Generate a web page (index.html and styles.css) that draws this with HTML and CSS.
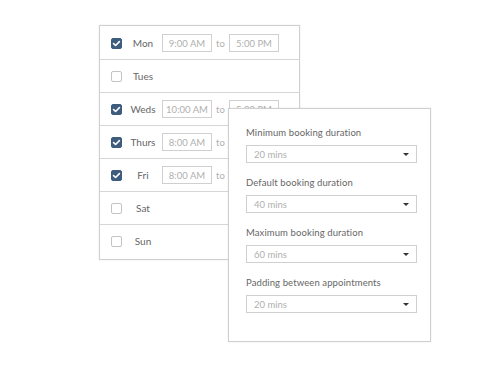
FILE: index.html
```html
<!DOCTYPE html>
<html>
<head>
<meta charset="utf-8">
<link rel="stylesheet" href="styles.css">
</head>
<body>
<div class="scene">
  <div class="days">
    <div class="row">
      <span class="cb on"><svg viewBox="0 0 11 11"><path d="M2.6 5.6 L4.6 7.5 L8.4 3.6" /></svg></span>
      <span class="day">Mon</span>
      <span class="time">9:00 AM</span><span class="to">to</span><span class="time">5:00 PM</span>
    </div>
    <div class="row">
      <span class="cb"></span>
      <span class="day">Tues</span>
    </div>
    <div class="row">
      <span class="cb on"><svg viewBox="0 0 11 11"><path d="M2.6 5.6 L4.6 7.5 L8.4 3.6" /></svg></span>
      <span class="day">Weds</span>
      <span class="time">10:00 AM</span><span class="to">to</span><span class="time">5:00 PM</span>
    </div>
    <div class="row">
      <span class="cb on"><svg viewBox="0 0 11 11"><path d="M2.6 5.6 L4.6 7.5 L8.4 3.6" /></svg></span>
      <span class="day">Thurs</span>
      <span class="time">8:00 AM</span><span class="to">to</span><span class="time">5:00 PM</span>
    </div>
    <div class="row">
      <span class="cb on"><svg viewBox="0 0 11 11"><path d="M2.6 5.6 L4.6 7.5 L8.4 3.6" /></svg></span>
      <span class="day">Fri</span>
      <span class="time">8:00 AM</span><span class="to">to</span><span class="time">5:00 PM</span>
    </div>
    <div class="row">
      <span class="cb"></span>
      <span class="day">Sat</span>
    </div>
    <div class="row">
      <span class="cb"></span>
      <span class="day">Sun</span>
    </div>
  </div>

  <div class="settings">
    <div class="field">
      <div class="label">Minimum booking duration</div>
      <div class="select"><span>20 mins</span><span class="caret"></span></div>
    </div>
    <div class="field">
      <div class="label">Default booking duration</div>
      <div class="select"><span>40 mins</span><span class="caret"></span></div>
    </div>
    <div class="field">
      <div class="label">Maximum booking duration</div>
      <div class="select"><span>60 mins</span><span class="caret"></span></div>
    </div>
    <div class="field">
      <div class="label">Padding between appointments</div>
      <div class="select"><span>20 mins</span><span class="caret"></span></div>
    </div>
  </div>
</div>
</body>
</html>
```

FILE: styles.css
```css
* { box-sizing: border-box; }
html, body { margin: 0; padding: 0; background: #ffffff; }
body { font-family: Lato, "Open Sans", sans-serif; color: #666; }

.scene {
  position: relative;
  width: 500px;
  height: 375px;
  padding: 25px 0 0 99px;
}

.days {
  width: 201px;
  border: 1px solid #cfcfcf;
  box-shadow: 0 0 2px rgba(0,0,0,0.08);
  padding: 1px 0 2px;
  background: #fff;
}

.row {
  display: flex;
  align-items: center;
  height: 33px;
  border-bottom: 1px solid #d6d6d6;
  padding-left: 11px;
}
.row:last-child { border-bottom: none; height: 32px; }

.cb {
  width: 11px;
  height: 11px;
  border: 1px solid #c4c4c4;
  border-radius: 2px;
  background: #fff;
  display: inline-flex;
  flex: none;
}
.cb.on {
  background: #3e5d7e;
  border-color: #3e5d7e;
}
.cb svg { width: 11px; height: 11px; margin: -1px; }
.cb path { fill: none; stroke: #fff; stroke-width: 1.6; stroke-linecap: round; stroke-linejoin: round; }

.day {
  width: 32px;
  margin-left: 5px;
  text-align: center;
  font-size: 10px;
  color: #666;
  flex: none;
}

.time {
  width: 50px;
  height: 18px;
  margin-left: 3px;
  border: 1px solid #d0d0d0;
  font-size: 9.5px;
  color: #b0b0b0;
  display: flex;
  align-items: center;
  justify-content: center;
  flex: none;
}
.to {
  width: 17px;
  text-align: center;
  font-size: 9.5px;
  color: #b0b0b0;
  margin-right: -3px;
}

.settings {
  position: absolute;
  left: 228px;
  top: 108px;
  width: 203px;
  height: 234px;
  background: #fff;
  border: 1px solid #cfcfcf;
  box-shadow: 0 0 2px rgba(0,0,0,0.08);
  padding: 18px 0 0 17px;
}

.field { margin-bottom: 14px; }

.label {
  font-size: 9.5px;
  line-height: 12px;
  color: #666;
  margin-bottom: 6px;
  letter-spacing: 0.1px;
}

.select {
  width: 171px;
  height: 18px;
  border: 1px solid #d0d0d0;
  display: flex;
  align-items: center;
  justify-content: space-between;
  padding: 0 7px 0 7px;
  font-size: 9.5px;
  color: #b0b0b0;
}
.caret {
  width: 0;
  height: 0;
  border-left: 3px solid transparent;
  border-right: 3px solid transparent;
  border-top: 3px solid #333;
}
```
